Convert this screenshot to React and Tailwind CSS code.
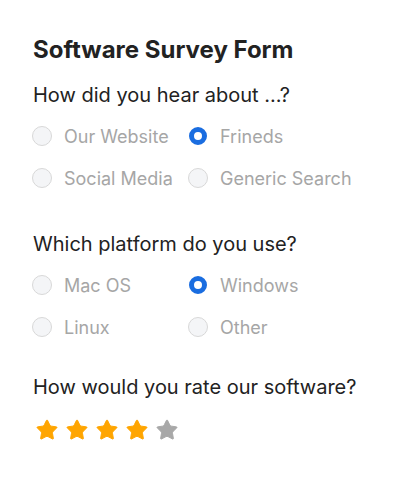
import React, { useState } from "react";
import { Star } from "lucide-react";

const font = { fontFamily: "Inter, 'Noto Sans', sans-serif" };

function Radio({ label, checked, onClick }) {
  return (
    <button onClick={onClick} className="flex items-center gap-[12px] h-[42px] text-left">
      <span className="w-5 h-5 flex items-center justify-center shrink-0">
        {checked ? (
          <span className="w-[18px] h-[18px] rounded-full border-[5px] border-[#1a6de0] bg-white" />
        ) : (
          <span className="w-5 h-5 rounded-full border-[1.5px] border-[#d8d8d8] bg-[#f4f5f7]" />
        )}
      </span>
      <span className="text-[18px] text-[#a6a6a6]">{label}</span>
    </button>
  );
}

function Group({ title, options, value, setValue }) {
  return (
    <div>
      <h3 className="text-[20px] text-[#222] leading-[28px] mb-[6px]">{title}</h3>
      <div className="grid grid-cols-[156px_1fr] -ml-px">
        {options.map((o) => (
          <Radio key={o} label={o} checked={value === o} onClick={() => setValue(o)} />
        ))}
      </div>
    </div>
  );
}

export default function App() {
  const [heard, setHeard] = useState("Frineds");
  const [platform, setPlatform] = useState("Windows");
  const [rating, setRating] = useState(4);

  return (
    <div style={font} className="w-[400px] h-[480px] bg-white pl-[33px] pt-[34px]">
      <h2 className="text-[24px] font-bold text-[#222] leading-[32px] mb-[15px]">Software Survey Form</h2>
      <Group
        title="How did you hear about ...?"
        options={["Our Website", "Frineds", "Social Media", "Generic Search"]}
        value={heard}
        setValue={setHeard}
      />
      <div className="h-[31px]" />
      <Group
        title="Which platform do you use?"
        options={["Mac OS", "Windows", "Linux", "Other"]}
        value={platform}
        setValue={setPlatform}
      />
      <div className="h-[25px]" />
      <h3 className="text-[20px] text-[#222] leading-[28px]">How would you rate our software?</h3>
      <div className="flex gap-[6px] mt-[17px] pl-[2px]">
        {[1, 2, 3, 4, 5].map((n) => (
          <button key={n} onClick={() => setRating(n)}>
            <Star
              size={24}
              strokeWidth={1}
              className={n <= rating ? "text-[#ffa500] fill-[#ffa500]" : "text-[#a8a8a8] fill-[#a8a8a8]"}
            />
          </button>
        ))}
      </div>
    </div>
  );
}
